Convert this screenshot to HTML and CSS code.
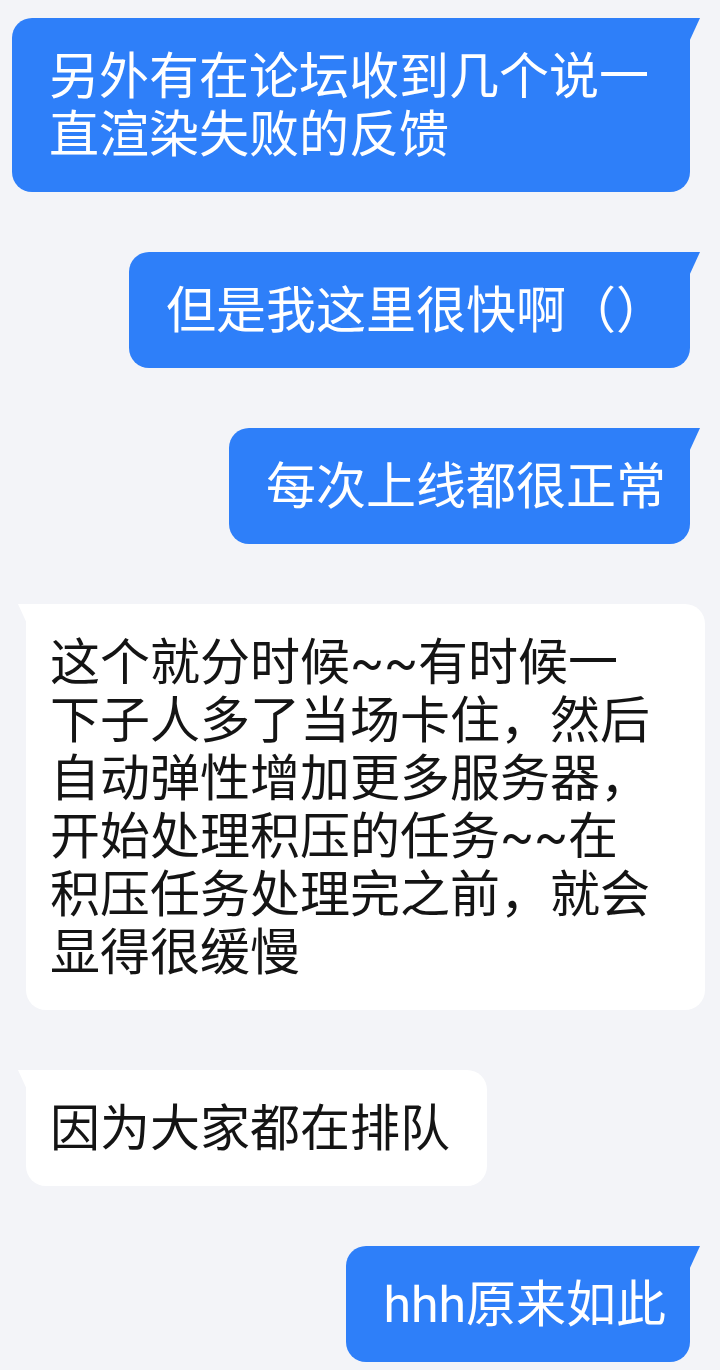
FILE: index.html
```html
<!DOCTYPE html>
<html lang="zh-CN">
<head>
  <meta charset="UTF-8" />
  <meta name="viewport" content="width=device-width, initial-scale=1" />
  <title>聊天记录</title>
  <link rel="stylesheet" href="styles.css">
</head>
<body>

  <!-- Chat history -->
  <div class="chat">
    <div class="bubble sent">另外有在论坛收到几个说一直渲染失败的反馈</div>
    <div class="bubble sent">但是我这里很快啊（）</div>
    <div class="bubble sent">每次上线都很正常</div>
    <div class="bubble received">这个就分时候~~有时候一下子人多了当场卡住，然后自动弹性增加更多服务器，开始处理积压的任务~~在积压任务处理完之前，就会显得很缓慢</div>
    <div class="bubble received">因为大家都在排队</div>
    <div class="bubble sent">hhh原来如此</div>
  </div>

</body>
</html>
```

FILE: styles.css
```css
body {
  margin: 0;
  background: #f3f4f8;
  font-family: Roboto, "Noto Sans CJK SC", sans-serif;
}
.chat {
  display: flex;
  flex-direction: column;
  gap: 60px;
  padding: 18px 0 12px;
}
.bubble {
  position: relative;
  max-width: 678px;
  box-sizing: border-box;
  padding: 30px 24px 28px;
  border-radius: 20px;
  font-size: 50px;
  line-height: 58px;
}
.sent {
  align-self: flex-end;
  margin-right: 30px;
  padding-left: 37px;
  background: #2e7ff9;
  color: #fff;
  border-top-right-radius: 0;
}
.received {
  align-self: flex-start;
  margin-left: 26px;
  max-width: 679px;
  padding-right: 37px;
  background: #fff;
  color: #141414;
  border-top-left-radius: 0;
}
/* little tail at the top corner */
.bubble::after {
  content: "";
  position: absolute;
  top: 0;
  width: 11px;
  height: 24px;
  background: inherit;
}
.sent::after {
  right: -10px;
  clip-path: polygon(0 0, 100% 0, 0 100%);
}
.received::after {
  left: -8px;
  clip-path: polygon(0 0, 100% 0, 100% 100%);
}
```
